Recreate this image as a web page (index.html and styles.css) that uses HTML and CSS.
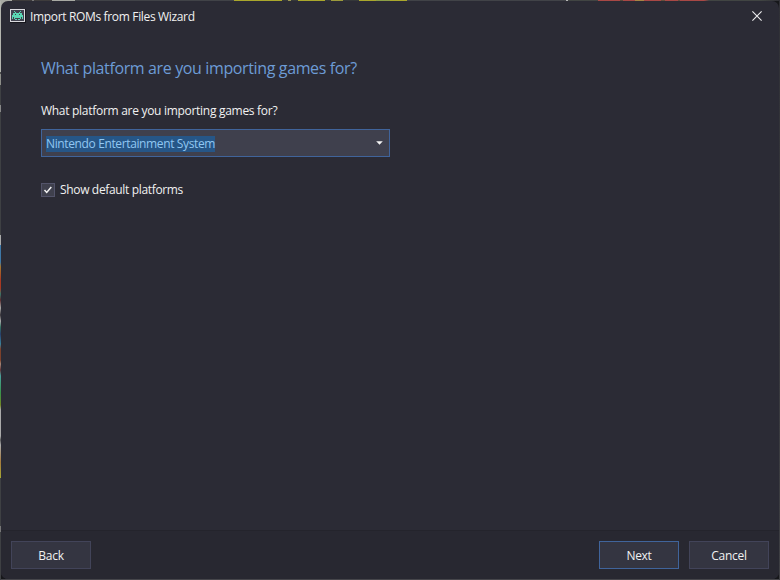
FILE: index.html
```
<!DOCTYPE html>
<html lang="en">
<head>
<meta charset="utf-8">
<title>Import ROMs from Files Wizard</title>
<link rel="stylesheet" href="styles.css">
</head>
<body>
<div class="window">
  <header class="titlebar">
    <svg class="app-icon" width="16" height="14" viewBox="0 0 16 14" shape-rendering="crispEdges">
      <path fill="#15151b" d="M0 0h16v14H0z"/>
      <path fill="#d9d9de" d="M0 0h15v13H0z"/>
      <path fill="#424350" d="M1 1h13v11H1z"/>
      <path fill="#5ad8b4" d="M4 2h1v1H4zM10 2h1v1h-1zM5 3h1v1H5zM9 3h1v1H9zM3 4h9v1H3zM3 5h2v1H3zM6 5h3v1H6zM10 5h2v1h-2zM2 6h11v2H2zM2 8h1v2H2zM4 8h7v1H4zM12 8h1v2h-1zM4 9h1v1H4zM10 9h1v1h-1zM5 10h2v1H5zM8 10h2v1H8z"/>
    </svg>
    <span class="caption">Import ROMs from Files Wizard</span>
    <button class="close" aria-label="Close">
      <svg width="10" height="10" viewBox="0 0 10 10"><path d="M.4.4l9.2 9.2M9.6.4L.4 9.6" stroke="#eeeeef" stroke-width="1.1"/></svg>
    </button>
  </header>
  <main class="content">
    <h1>What platform are you importing games for?</h1>
    <p class="label">What platform are you importing games for?</p>
    <div class="combo">
      <span class="selected">Nintendo Entertainment System</span>
      <svg width="7" height="4" viewBox="0 0 7 4"><path d="M.2.2h6.6L3.5 3.7z" fill="#f5f5f5"/></svg>
    </div>
    <div class="check">
      <span class="box"><svg width="10" height="10" viewBox="0 0 10 10"><path d="M1.5 5l2.2 2.4L8.3 1.9" fill="none" stroke="#f2f2f2" stroke-width="1.5"/></svg></span>
      <span class="check-text">Show default platforms</span>
    </div>
  </main>
  <footer class="actions">
    <button class="btn back">Back</button>
    <button class="btn primary">Next</button>
    <button class="btn">Cancel</button>
  </footer>
</div>
</body>
</html>
```
FILE: styles.css
```
* { box-sizing: border-box; }
body {
  margin: 0;
  width: 780px;
  height: 580px;
  padding: 1px;
  overflow: hidden;
  font: 12px/16px "Open Sans", "Noto Sans", sans-serif;
  color: #f1f1f1;
  background:
    linear-gradient(90deg, #a8aaa3 0 12px, #3e3c3c 12px 32px, #777 32px 34px, #3e3c3c 34px 52px, #a8aaa3 52px 75px, #414348 75px 234px, #aaa72c 234px 282px, #35383a 282px 288px, #9b9651 288px 291px, #35383a 291px 298px, #aaa72c 298px 325px, #35383a 325px 331px, #9c9a3c 331px 343px, #35383a 343px 359px, #aaa72c 359px 376px, #8c9e46 376px 390px, #aaa72c 390px 407px, #414348 407px 566px, #b5b5b5 566px 568px, #414543 568px 598px, #a84845 598px 620px, #5c4b3c 620px 623px, #a84845 623px 635px, #a78444 635px 644px, #a84845 644px 661px, #66503c 661px 665px, #a84845 665px 678px, #66503c 678px 680px, #a84845 680px 704px, #414543 709px 760px, #303036 780px) 0 0 / 780px 1px no-repeat,
    linear-gradient(#b3b5ae 0 72px, #4d4e4e 72px 74px, #8c8d88 74px 85px, #3e4043 85px 105px, #888 105px 112px, #3e4043 112px 235px, #aaa 235px 245px, #3e78a7 245px 262px, #a5752d 267px, #a83922 280px 288px, #397568 294px, #582b2e 300px, #a6a6a4 308px, #39353b 315px, #aaa 321px, #347261 327px, #273e6b 334px, #3a819b 344px, #7d412b 349px 360px, #a58676 364px, #5e3438 370px, #49a19c 376px, #39924b 393px, #718622 405px, #aaa 410px 436px, #5a5b5b 440px, #aaa 445px, #a67b3d 462px, #a5a735 478px, #3e4043 478px 526px, #777 526px 532px, #3e4043 532px) 0 0 / 1px 580px no-repeat,
    linear-gradient(#303136, #3e3f43) 779px 0 / 1px 580px no-repeat,
    linear-gradient(#46464b, #46464b) 0 579px / 780px 1px no-repeat,
    linear-gradient(135deg, #a8aaa3 0 8px, #16171a 8px);
}
.window {
  height: 578px;
  display: flex;
  flex-direction: column;
  border-radius: 7px;
  overflow: hidden;
  background: #2b2b35;
}
.titlebar {
  height: 30px;
  display: flex;
  align-items: center;
  padding: 0 17px 0 9px;
}
.caption { margin-left: 4px; padding-top: 1px; letter-spacing: -.34px; }
button { font: inherit; color: inherit; }
.close {
  display: flex;
  margin-left: auto;
  padding: 0;
  border: 0;
  background: none;
}
.content { flex: 1; padding: 25px 40px; }
h1 {
  margin: 0;
  font-size: 16px;
  line-height: 24px;
  font-weight: 400;
  letter-spacing: -.37px;
  color: #6d9cd6;
}
.label { margin: 23px 0 10px; letter-spacing: -.29px; }
.combo {
  width: 349px;
  height: 28px;
  display: flex;
  align-items: center;
  justify-content: space-between;
  padding: 0 6px 0 4px;
  border: 1px solid #40649b;
  background: #3f404d;
}
.selected { margin-top: 2px; letter-spacing: -.37px; background: #265687; color: #91c7f2; }
.check {
  display: flex;
  align-items: center;
  gap: 5px;
  margin-top: 25px;
}
.box {
  width: 14px;
  height: 14px;
  display: flex;
  align-items: center;
  justify-content: center;
  border: 1px solid #53546a;
  background: #3f404d;
}
.check-text { letter-spacing: -.34px; }
.actions {
  height: 49px;
  display: flex;
  gap: 10px;
  padding: 10px 10px 0;
  border-top: 1px solid #24242c;
  background: #282831;
}
.btn {
  width: 80px;
  height: 28px;
  padding: 2px 0 0;
  border: 1px solid #424459;
  background: #343541;
  letter-spacing: -.3px;
}
.back { margin-right: auto; }
.primary { border-color: #40649b; }
```
